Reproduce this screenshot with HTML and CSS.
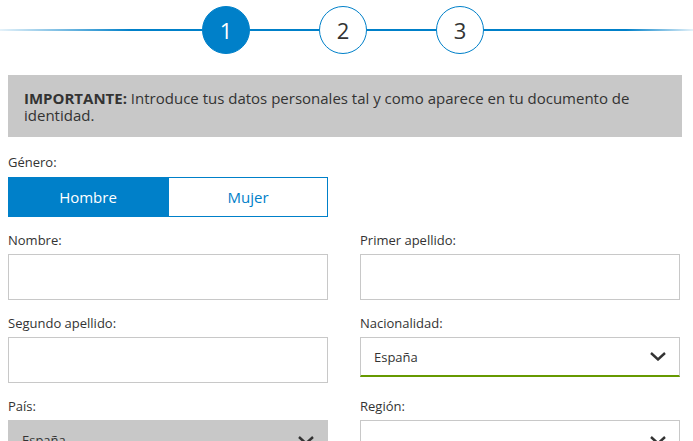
FILE: index.html
```html
<!DOCTYPE html>
<html lang="es">
<head>
    <meta charset="UTF-8">
    <meta name="viewport" content="width=device-width, initial-scale=1.0">
    <title>Datos personales</title>
    <link rel="stylesheet" href="styles.css">
</head>
<body>
    <div class="stepper">
        <span class="line line-left"></span>
        <span class="step active">1</span>
        <span class="seg"></span>
        <span class="step">2</span>
        <span class="seg"></span>
        <span class="step">3</span>
        <span class="line line-right"></span>
    </div>

    <div class="container">
        <div class="notice">
            <strong>IMPORTANTE:</strong> Introduce tus datos personales tal y como aparece en tu documento de identidad.
        </div>

        <div class="field gender">
            <label>Género:</label>
            <div class="toggle">
                <button class="toggle-btn active">Hombre</button>
                <button class="toggle-btn">Mujer</button>
            </div>
        </div>

        <div class="grid">
            <div class="field">
                <label for="nombre">Nombre:</label>
                <input type="text" id="nombre">
            </div>
            <div class="field">
                <label for="apellido1">Primer apellido:</label>
                <input type="text" id="apellido1">
            </div>
            <div class="field">
                <label for="apellido2">Segundo apellido:</label>
                <input type="text" id="apellido2">
            </div>
            <div class="field">
                <label>Nacionalidad:</label>
                <div class="select valid">
                    <span>España</span>
                    <svg class="chevron" width="16" height="9" viewBox="0 0 16 9"><path d="M1 1l7 6.5L15 1" fill="none" stroke="#333" stroke-width="2.4"/></svg>
                </div>
            </div>
            <div class="field">
                <label>País:</label>
                <div class="select disabled">
                    <span>España</span>
                    <svg class="chevron" width="16" height="9" viewBox="0 0 16 9"><path d="M1 1l7 6.5L15 1" fill="none" stroke="#333" stroke-width="2.4"/></svg>
                </div>
            </div>
            <div class="field">
                <label>Región:</label>
                <div class="select">
                    <span></span>
                    <svg class="chevron" width="16" height="9" viewBox="0 0 16 9"><path d="M1 1l7 6.5L15 1" fill="none" stroke="#333" stroke-width="2.4"/></svg>
                </div>
            </div>
        </div>
    </div>
</body>
</html>
```

FILE: styles.css
```css
html {
    overflow: hidden;
}

body {
    margin: 0;
    font-family: 'Open Sans', 'Noto Sans', sans-serif;
    color: #333;
    background-color: white;
}

/* Pasos */
.stepper {
    display: flex;
    align-items: center;
    height: 48px;
    padding-top: 6px;
}

.line {
    height: 2px;
}

.line-left {
    flex: 0 0 202px;
    background: linear-gradient(to right, rgba(0, 128, 201, 0.1), #0080c9 65%);
}

.line-right {
    flex: 1;
    background: linear-gradient(to left, rgba(0, 128, 201, 0.1), #0080c9 32%);
}

.seg {
    width: 69px;
    height: 2px;
    background-color: #0080c9;
}

.step {
    width: 46px;
    height: 46px;
    border: 1px solid #0080c9;
    border-radius: 50%;
    display: flex;
    align-items: center;
    justify-content: center;
    font-size: 22px;
    color: #333;
    background-color: white;
}

.step.active {
    background-color: #0080c9;
    color: white;
}

.container {
    width: 672px;
    margin: 21px 0 0 8px;
}

.notice {
    background-color: #c8c8c8;
    padding: 15px 16px 13px;
    font-size: 15px;
    line-height: 17px;
    margin-bottom: 16px;
    width: 642px;
}

.field {
    margin-bottom: 14px;
}

.field label {
    display: block;
    font-size: 13px;
    line-height: 18px;
    margin-bottom: 5px;
}

.gender label {
    margin-bottom: 6px;
}

.toggle {
    display: flex;
    width: 320px;
}

.toggle-btn {
    flex: 1;
    height: 40px;
    border: 1px solid #0080c9;
    background-color: white;
    color: #0080c9;
    font-family: inherit;
    font-size: 15px;
    padding: 0;
}

.toggle-btn.active {
    background-color: #0080c9;
    color: white;
}

.grid {
    display: grid;
    grid-template-columns: 320px 320px;
    column-gap: 32px;
    align-items: start;
}

.grid input {
    display: block;
    box-sizing: border-box;
    width: 100%;
    height: 46px;
    border: 1px solid #c8c8c8;
    padding: 0 12px;
    font-family: inherit;
    font-size: 13px;
}

.select {
    box-sizing: border-box;
    height: 40px;
    border: 1px solid #c8c8c8;
    display: flex;
    align-items: center;
    justify-content: space-between;
    padding: 0 13px 0 13px;
    font-size: 13px;
    background-color: white;
}

.select.valid {
    border-bottom: 2px solid #669900;
}

.select.disabled {
    background-color: #c8c8c8;
    border-color: #c8c8c8;
}
```
